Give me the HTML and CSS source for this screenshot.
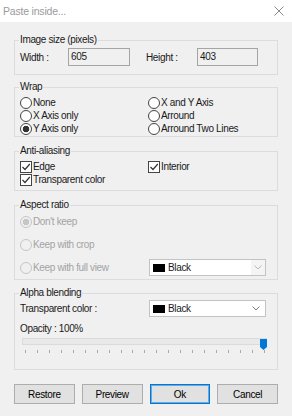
FILE: index.html
```html
<!DOCTYPE html>
<html>
<head>
<meta charset="utf-8">
<link rel="stylesheet" href="styles.css">
</head>
<body>
<div class="titlebar">
  <span class="title">Paste inside...</span>
  <svg class="close" width="10" height="10" viewBox="0 0 10 10"><path d="M0.5 0.5 L9.5 9.5 M9.5 0.5 L0.5 9.5" stroke="#8a8a8a" stroke-width="1" fill="none"/></svg>
</div>
<div class="content">
  <fieldset class="group g1">
    <legend>Image size (pixels)</legend>
    <div class="sizerow">
      <span class="lbl-w">Width :</span>
      <span class="field f1">605</span>
      <span class="lbl-h">Height :</span>
      <span class="field f2">403</span>
    </div>
  </fieldset>

  <fieldset class="group g2">
    <legend>Wrap</legend>
    <div class="grid2 rows13">
      <div class="opt"><span class="radio"></span><span>None</span></div>
      <div class="opt"><span class="radio"></span><span>X and Y Axis</span></div>
      <div class="opt"><span class="radio"></span><span>X Axis only</span></div>
      <div class="opt"><span class="radio"></span><span>Arround</span></div>
      <div class="opt"><span class="radio on"></span><span>Y Axis only</span></div>
      <div class="opt"><span class="radio"></span><span>Arround Two Lines</span></div>
    </div>
  </fieldset>

  <fieldset class="group g3">
    <legend>Anti-aliasing</legend>
    <div class="grid2 rows13">
      <div class="opt"><span class="check"><svg width="10" height="10" viewBox="0 0 10 10"><path d="M1.5 5 L4 7.5 L8.8 2" stroke="#333" stroke-width="1.2" fill="none"/></svg></span><span>Edge</span></div>
      <div class="opt"><span class="check"><svg width="10" height="10" viewBox="0 0 10 10"><path d="M1.5 5 L4 7.5 L8.8 2" stroke="#333" stroke-width="1.2" fill="none"/></svg></span><span>Interior</span></div>
      <div class="opt"><span class="check"><svg width="10" height="10" viewBox="0 0 10 10"><path d="M1.5 5 L4 7.5 L8.8 2" stroke="#333" stroke-width="1.2" fill="none"/></svg></span><span>Transparent color</span></div>
    </div>
  </fieldset>

  <fieldset class="group g4">
    <legend>Aspect ratio</legend>
    <div class="aspect">
      <div class="arow"><div class="opt dis"><span class="radio on"></span><span>Don't keep</span></div></div>
      <div class="arow"><div class="opt dis"><span class="radio"></span><span>Keep with crop</span></div></div>
      <div class="arow grid2">
        <div class="opt dis"><span class="radio"></span><span>Keep with full view</span></div>
        <div class="combo dimarrow"><span class="swatch"></span><span class="ctext">Black</span><svg class="chev" width="8" height="5" viewBox="0 0 8 5"><path d="M0.5 0.5 L4 4 L7.5 0.5" stroke="#b8b8b8" fill="none"/></svg></div>
      </div>
    </div>
  </fieldset>

  <fieldset class="group g5">
    <legend>Alpha blending</legend>
    <div class="grid2 trow">
      <span class="tlabel">Transparent color :</span>
      <div class="combo"><span class="swatch"></span><span class="ctext">Black</span><svg class="chev" width="8" height="5" viewBox="0 0 8 5"><path d="M0.5 0.5 L4 4 L7.5 0.5" stroke="#7a7a7a" fill="none"/></svg></div>
    </div>
    <div class="opacity">Opacity : 100%</div>
    <div class="slider">
      <div class="track"></div>
      <svg class="thumb" width="7" height="11" viewBox="0 0 7 11"><path d="M0 0 H7 V8 L3.5 11 L0 8 Z" fill="#0078d7"/></svg>
      <div class="ticks">
        <i></i><i></i><i></i><i></i><i></i><i></i><i></i><i></i><i></i><i></i><i></i><i></i><i></i><i></i><i></i><i></i><i></i><i></i><i></i><i></i><i></i>
      </div>
    </div>
  </fieldset>

  <div class="buttons">
    <button class="btn">Restore</button>
    <button class="btn">Preview</button>
    <button class="btn default">Ok</button>
    <button class="btn">Cancel</button>
  </div>
</div>
</body>
</html>
```

FILE: styles.css
```css
* { box-sizing: border-box; }
html, body { margin: 0; padding: 0; }
body {
  width: 292px;
  height: 416px;
  background: #f0f0f0;
  font-family: "Liberation Sans", Arial, sans-serif;
  font-size: 10px;
  letter-spacing: -0.35px;
  color: #1a1a1a;
  overflow: hidden;
}
.titlebar {
  height: 22px;
  background: #fff;
  display: flex;
  align-items: center;
  justify-content: space-between;
  padding: 0 8px 0 3px;
}
.title {
  color: #9a9a9a;
  font-size: 10.5px;
  letter-spacing: -0.2px;
}
.close { display: block; }
.content {
  padding: 12px 14px 0 14px;
  display: flex;
  flex-direction: column;
}
.group {
  margin: 0;
  padding: 0 6px 0 5px;
  border: 1px solid #dcdcdc;
  min-inline-size: 0;
}
.group legend {
  padding: 0 1px;
  margin-left: -1px;
  line-height: 12px;
  height: 12px;
}
.g1 { padding-top: 2px; padding-bottom: 8px; }
.g2 { margin-top: 6px; padding-top: 3px; padding-bottom: 1px; }
.g3 { margin-top: 8px; padding-top: 3px; padding-bottom: 4px; }
.g4 { margin-top: 8px; padding-top: 1px; padding-bottom: 2px; }
.g5 { margin-top: 7px; padding-top: 1px; padding-bottom: 13px; }

.sizerow { display: flex; align-items: center; height: 18px; }
.lbl-w { width: 48px; }
.lbl-h { width: 51px; margin-left: 16px; }
.field {
  height: 18px;
  border: 1px solid #a5a5a5;
  background: #f0f0f0;
  padding: 0 2px;
  line-height: 16px;
}
.f1 { width: 62px; }
.f2 { width: 61px; }

.grid2 {
  display: grid;
  grid-template-columns: 128px 1fr;
  align-items: center;
}
.rows13 { grid-auto-rows: 13px; }
.opt { display: flex; align-items: center; gap: 1px; white-space: nowrap; }
.opt.dis { color: #a3a3a3; }
.radio {
  width: 12px;
  height: 12px;
  border-radius: 50%;
  border: 1px solid #444;
  background: #fff;
  flex: none;
}
.radio.on { background: radial-gradient(circle, #333 0 3px, #fff 3.6px); }
.dis .radio { border-color: #c6c6c6; background: #f0f0f0; }
.dis .radio.on { background: radial-gradient(circle, #c6c6c6 0 3px, #f0f0f0 3.6px); }
.check {
  width: 12px;
  height: 12px;
  border: 1px solid #444;
  background: #fff;
  flex: none;
  display: flex;
  align-items: center;
  justify-content: center;
}
.check svg { display: block; }

.aspect { display: flex; flex-direction: column; gap: 4px; }
.arow { height: 19px; display: flex; align-items: center; }
.arow.grid2 { display: grid; }

.combo {
  height: 17px;
  width: 117px;
  margin-left: 1px;
  border: 1px solid #c3c3c3;
  background: #fff;
  display: flex;
  align-items: center;
  padding: 0 0 0 3px;
  position: relative;
}
.swatch { width: 12px; height: 8px; background: #000; flex: none; }
.ctext { margin-left: 3px; flex: 1; }
.chev { margin-right: 5px; }
.dimarrow .chev { margin-right: 0; width: 14px; height: 15px; padding: 5px 3px; background: #f4f4f4; }

.trow { height: 16px; }
.opacity { margin-top: 6px; line-height: 13px; }
.slider {
  position: relative;
  height: 18px;
  margin-left: 2px;
  margin-right: 4px;
}
.track {
  margin-top: 3px;
  height: 7px;
  border: 1px solid #dadada;
  background: #e9e9e9;
}
.thumb { position: absolute; right: 0; top: 1px; }
.ticks {
  display: flex;
  justify-content: space-between;
  margin: 5px 2px 0 3px;
}
.ticks i { display: block; width: 1px; height: 3px; background: #a9a9a9; }

.buttons {
  margin-top: 14px;
  display: grid;
  grid-template-columns: repeat(4, 1fr);
  gap: 7px;
}
.btn {
  height: 20px;
  margin: 0;
  padding: 0;
  font-family: "Liberation Sans", Arial, sans-serif;
  font-size: 10px;
  letter-spacing: -0.35px;
  color: #000;
  background: #e1e1e1;
  border: 1px solid #adadad;
}
.btn.default {
  border: 1px solid #0078d7;
  box-shadow: inset 0 0 0 1px #6aa9e0;
}
```
